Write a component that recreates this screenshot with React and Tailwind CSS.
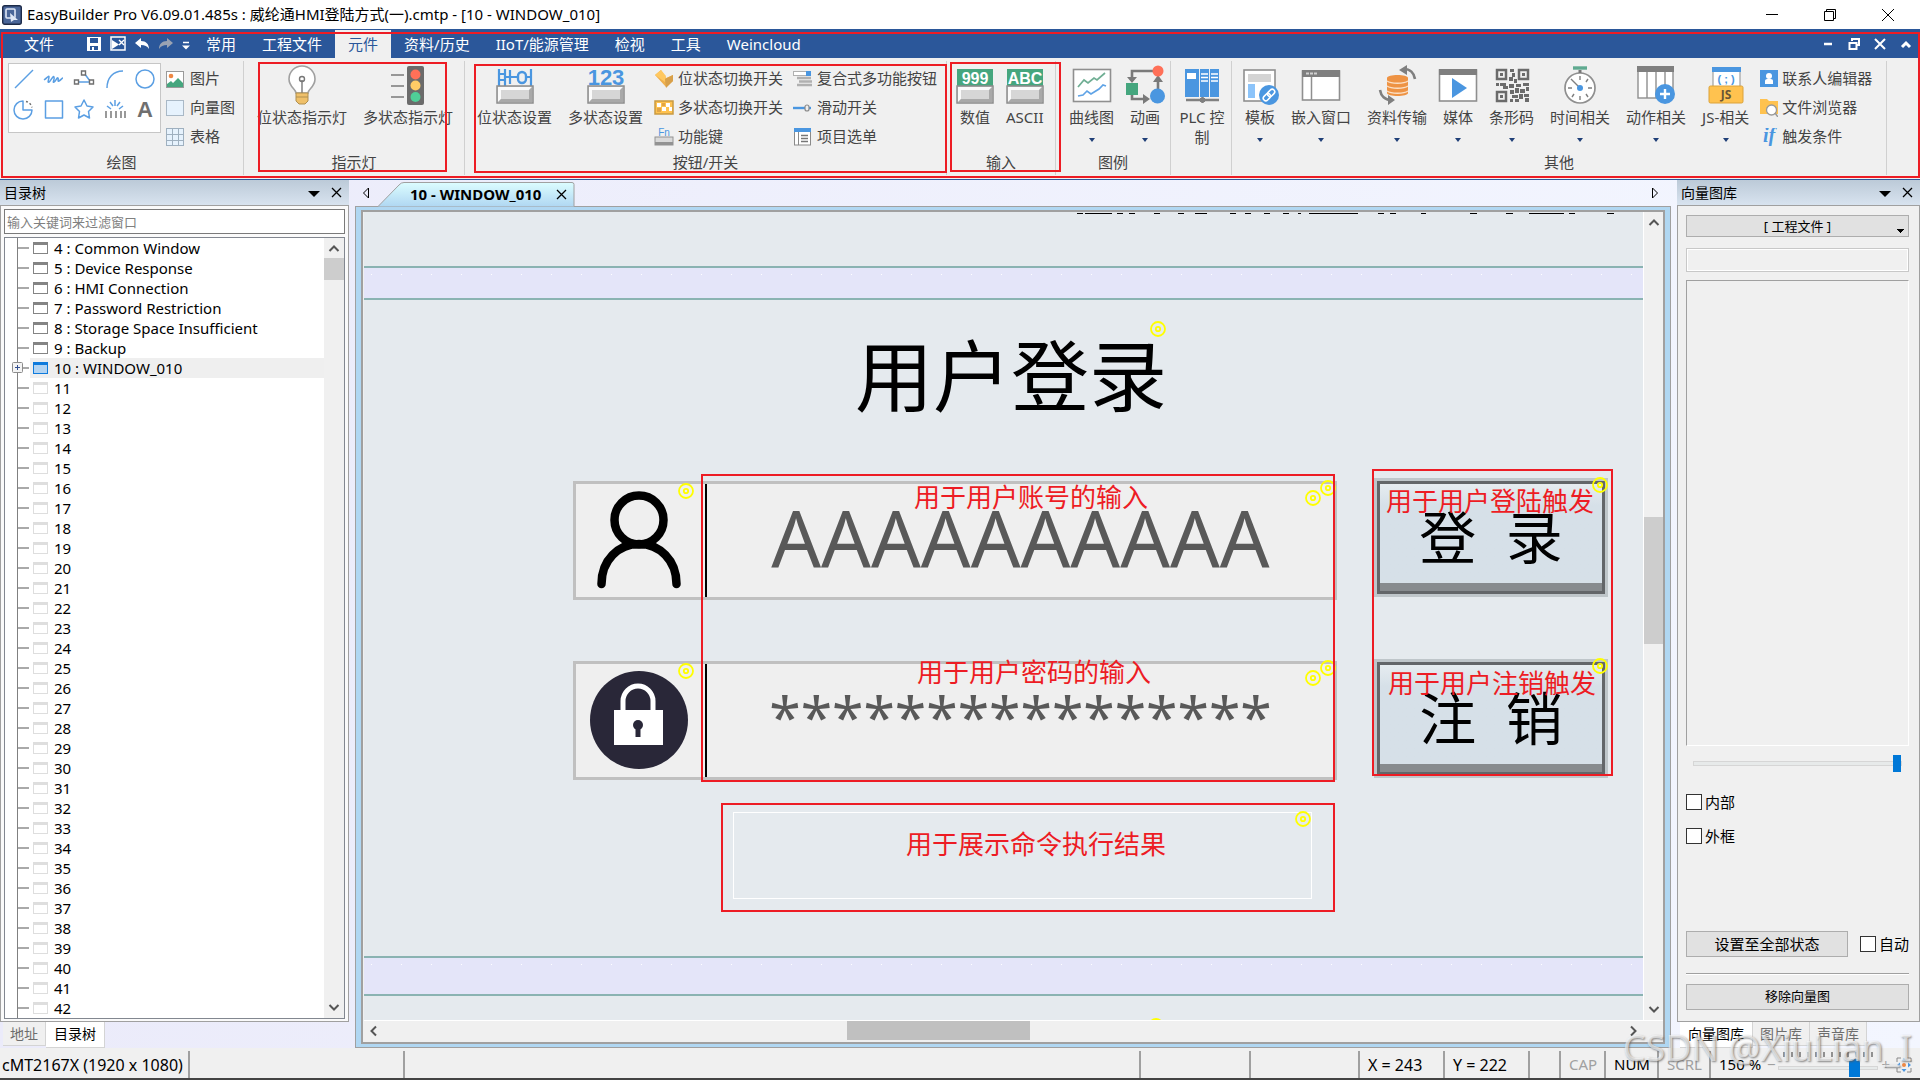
import { useState } from "react";
import clsx from "clsx";

const BLUE = "#4a96e0";
const GRAY = "#6f6f6f";

function Icon({ w = 40, h = 40, box, className, children }) {
  return (
    <svg width={w} height={h} viewBox={box || `0 0 ${w} ${h}`} fill="none" className={clsx("shrink-0", className)} aria-hidden="true">
      {children}
    </svg>
  );
}

/* ---------- ribbon icons ---------- */

function Keycap() {
  return (
    <>
      <rect x="2" y="21" width="36" height="17" fill="#d6d6d6" stroke="#8c8c8c" strokeWidth="1.5" />
      <path d="M3 22h34l-3 3H6v9l-3 3z" fill="#fafafa" />
      <path d="M37 22v15H3l3-3h28v-9z" fill="#a9a9a9" />
    </>
  );
}

const bulbIcon = (
  <Icon>
    <path d="M14 28c0-4-7-6-7-14a13 13 0 0 1 26 0c0 8-7 10-7 14z" fill="#fff" stroke="#a0a0a0" strokeWidth="1.6" />
    <circle cx="20" cy="14" r="2.5" stroke="#777" strokeWidth="1.4" />
    <path d="M20 15v13" stroke="#777" strokeWidth="1.4" />
    <path d="M14 28h12v8l-3 3h-6l-3-3z" fill="#efc06a" stroke="#b09050" strokeWidth="1" />
    <path d="M14 32h12" stroke="#b09050" />
  </Icon>
);

const trafficIcon = (
  <Icon>
    <path d="M3 10h13M3 21h13M3 32h13" stroke="#7a7a7a" strokeWidth="1.6" />
    <rect x="19" y="1" width="17" height="39" rx="2" fill="#6b6b6b" />
    <circle cx="27.500" cy="9.500" r="5" fill="#ff7058" />
    <circle cx="27.500" cy="20.500" r="5" fill="#ffcc66" />
    <circle cx="27.500" cy="32" r="5" fill="#4fce97" />
  </Icon>
);

const bitSetIcon = (
  <Icon>
    <path d="M4 4v17M10 4v17M4 9h6M4 15h6M10 12h4M15 5v14M15 12h8M36 4v17M31 12h5" stroke={BLUE} strokeWidth="2.2" />
    <rect x="23" y="7" width="8" height="11" rx="4" stroke={BLUE} strokeWidth="2.4" />
    <Keycap />
  </Icon>
);

const wordSetIcon = (
  <Icon>
    <text x="20" y="20" textAnchor="middle" fontSize="22" fontWeight="700" fill={BLUE} fontFamily="Liberation Sans">
      123
    </text>
    <Keycap />
  </Icon>
);

function CapLabelIcon({ label }) {
  return (
    <Icon>
      <rect x="2" y="4" width="36" height="18" fill="#45a67e" />
      <text x="20" y="19" textAnchor="middle" fontSize="16" fontWeight="700" fill="#fff" fontFamily="Liberation Sans">
        {label}
      </text>
      <Keycap />
    </Icon>
  );
}

const trendIcon = (
  <Icon>
    <rect x="1.500" y="4.500" width="37" height="32" fill="#fff" stroke="#8f8f8f" strokeWidth="1.600" />
    <path d="m6 22 6-7 4 3 6-5 3 2 8-7" stroke="#6fae93" strokeWidth="1.700" />
    <path d="m6 31 5-1 4-4 4 3 8-5 4-4 3 1" stroke="#5fa3e6" strokeWidth="1.700" />
  </Icon>
);

const animIcon = (
  <Icon>
    <path d="M32 6H7v9M7 30v4h13M33 24V14" stroke="#7a7a7a" strokeWidth="2.600" />
    <path d="M2 12h10l-5 6zM18 29v10l7-5zM28 17h10l-5-7z" fill="#7a7a7a" />
    <rect x="1" y="18" width="12" height="12" fill="#45a67e" />
    <circle cx="33" cy="6" r="5.500" fill="#ff7058" />
    <circle cx="32.500" cy="31" r="7.500" fill={BLUE} />
  </Icon>
);

const plcIcon = (
  <Icon>
    <rect x="3" y="4" width="14" height="28" fill={BLUE} />
    <rect x="18" y="4" width="9" height="28" fill={BLUE} />
    <rect x="28" y="4" width="9" height="28" fill={BLUE} />
    <rect x="5" y="8" width="9" height="6" fill="#fff" />
    <path d="M19 9h7M19 12.500h7M19 16h7M29 9h7M29 12.500h7M29 16h7" stroke="#fff" strokeWidth="1.500" />
    <path d="M4 35h33M20.500 32v6" stroke="#808080" strokeWidth="2.500" />
    <rect x="18" y="33" width="5" height="4" fill="#808080" />
  </Icon>
);

const templateIcon = (
  <Icon>
    <rect x="4" y="5" width="31" height="31" fill="#fff" stroke="#8f8f8f" strokeWidth="1.600" />
    <rect x="8" y="9" width="23" height="8" fill="#d4d4d4" />
    <rect x="8" y="19" width="7" height="14" fill="#8cc4fa" />
    <circle cx="29" cy="30" r="10" fill={BLUE} />
    <g transform="rotate(-45 29 30)" stroke="#fff" strokeWidth="1.600">
      <rect x="22" y="27.500" width="8" height="5" rx="2.500" />
      <rect x="28" y="27.500" width="8" height="5" rx="2.500" />
    </g>
  </Icon>
);

const embedIcon = (
  <Icon>
    <rect x="1.500" y="6" width="37" height="29" fill="#fff" stroke="#8f8f8f" strokeWidth="1.600" />
    <rect x="1" y="5" width="38" height="7" fill="#7f7f7f" />
    <path d="M5 8.500h3M9 8.500h3M13 8.500h3" stroke="#d0d0d0" strokeWidth="2" />
    <path d="M10.500 12v23" stroke="#8f8f8f" strokeWidth="1.500" />
  </Icon>
);

const transferIcon = (
  <Icon>
    <path d="M10 13c0-4 21-4 21 0v15c0 4-21 4-21 0z" fill="#ee9344" />
    <path d="M10 16c4 3 17 3 21 0M10 21c4 3 17 3 21 0M10 26c4 3 17 3 21 0" stroke="#fbe0c6" strokeWidth="1.300" />
    <path d="M27 4c6 0 10 4 11 10M14 35C8 35 4 31 3 25" stroke="#7f7f7f" strokeWidth="2.600" />
    <path d="m22 5 8-5v10zM18 35l-7-5v10z" fill="#7f7f7f" />
  </Icon>
);

const mediaIcon = (
  <Icon>
    <rect x="1.500" y="5" width="37" height="31" fill="#fff" stroke="#8f8f8f" strokeWidth="1.600" />
    <rect x="1" y="4" width="38" height="6" fill="#7f7f7f" />
    <path d="m14 13 15 10-15 10z" fill={BLUE} />
  </Icon>
);

const qrIcon = (
  <Icon>
    <g stroke="#6b6b6b" strokeWidth="2.500">
      <rect x="5" y="5" width="9" height="9" />
      <rect x="27" y="5" width="9" height="9" />
      <rect x="5" y="27" width="9" height="9" />
    </g>
    <path
      fill="#6b6b6b"
      d="M8 8h3v3H8zM30 8h3v3h-3zM8 30h3v3H8zM18 4h4v3h-4zM20 8h3v4h-3zM17 12h4v4h-4zM22 14h3v4h-3zM4 18h3v3H4zM8 18h6v3H8zM11 21h5v3h-5zM17 19h5v4h-5zM24 19h5v3h-5zM31 18h6v3h-6zM34 22h3v4h-3zM18 25h4v4h-4zM23 23h4v5h-4zM28 24h5v4h-5zM20 30h6v3h-6zM27 29h4v5h-4zM32 29h5v3h-5zM18 34h3v3h-3zM23 34h4v3h-4zM33 33h4v4h-4z"
    />
  </Icon>
);

const timerIcon = (
  <Icon>
    <circle cx="20" cy="23" r="15" fill="#fff" stroke="#8f8f8f" strokeWidth="1.700" />
    <path d="M13 3h14" stroke="#5faa90" strokeWidth="3.400" />
    <path d="M20 5v3" stroke="#777" strokeWidth="3" />
    <path d="M20 11v4M20 31v4M8 23h4M28 23h4M28 14l-2 3M12 32l2-3M28 32l-2-3M11 14l8 8" stroke="#7f7f7f" strokeWidth="1.400" />
    <circle cx="20" cy="23" r="3" fill={BLUE} />
  </Icon>
);

const actionIcon = (
  <Icon>
    <rect x="2" y="3" width="35" height="30" fill="#fff" stroke="#8f8f8f" strokeWidth="1.400" />
    <rect x="1" y="1" width="37" height="6" fill="#7f7f7f" />
    <path d="M11 7v26M20 7v26M29 7v26" stroke="#8f8f8f" strokeWidth="1.400" />
    <circle cx="29" cy="29" r="10" fill={BLUE} />
    <path d="M24 29h10M29 24v10" stroke="#fff" strokeWidth="2.400" />
  </Icon>
);

const jsIcon = (
  <Icon>
    <rect x="7" y="3" width="27" height="20" fill="#fff" stroke="#a0a0a0" strokeWidth="1.200" />
    <rect x="6" y="2" width="29" height="5" fill={BLUE} />
    <text x="20" y="18" textAnchor="middle" fontSize="11" fontWeight="700" fill={BLUE} fontFamily="Liberation Sans">
      {"( ; )"}
    </text>
    <rect x="3" y="21" width="34" height="17" rx="1.500" fill="#ffc24f" stroke="#dba23a" />
    <text x="20" y="34" textAnchor="middle" fontSize="12" fontWeight="700" fill="#6a5636" fontFamily="Noto Sans">
      JS
    </text>
  </Icon>
);

const smallIcons = {
  picture: (
    <Icon w={18} h={18}>
      <rect x=".5" y="1.500" width="17" height="16" fill="#fff" stroke="#9a9a9a" />
      <circle cx="5" cy="6" r="2.300" fill="#ee8844" />
      <path d="m1 14 4-3 2 2 5-5 5 5v4H1z" fill="#45a67e" />
    </Icon>
  ),
  vector: (
    <Icon w={18} h={18}>
      <rect x=".5" y="1.500" width="17" height="15" fill="#e6f2fd" stroke="#a9b8c6" />
    </Icon>
  ),
  table: (
    <Icon w={18} h={18}>
      <rect x=".5" y=".5" width="17" height="17" fill="#e6f2fd" stroke="#9fb0bf" />
      <path d="M6.500 0v18M12.500 0v18M0 6.500h18M0 12.500h18" stroke="#9fb0bf" />
    </Icon>
  ),
  toggle: (
    <Icon w={20} h={18}>
      <path d="m1 5 6-5 5 8 7-3v6l-7 6z" fill="#efb04e" />
      <path d="m1 5 6-5 5 6-1 6z" fill="#ffc860" />
      <path d="m11 9 8-4v6l-7 7z" fill="#d8a04a" />
    </Icon>
  ),
  multiToggle: (
    <Icon w={20} h={18}>
      <rect x="1" y="2" width="18" height="13" fill="#ffc24f" stroke="#c99a42" strokeWidth="1.500" />
      <path d="M3 4h4v4H3zM12 4h4v4h-4zM8 8h4v4H8zM15 8h3v4h-3z" fill="#fff" />
      <path d="M3 9h4v4H3zM8 4h3v3H8z" fill="#e0a548" />
    </Icon>
  ),
  fnKey: (
    <Icon w={20} h={18}>
      <text x="10" y="8" textAnchor="middle" fontSize="10" fill={BLUE} fontFamily="Liberation Sans">
        Fn
      </text>
      <rect x="1" y="9" width="18" height="8" fill="#d9d9d9" stroke="#929292" />
      <path d="M1 14h18v3H1z" fill="#929292" />
    </Icon>
  ),
  combo: (
    <Icon w={20} h={18}>
      <rect x=".5" y="1.500" width="17" height="4" fill="#fff" stroke="#b0b0b0" />
      <rect x="13" y="1" width="5" height="5" fill={BLUE} />
      <path d="M4 8h14M6 11.500h13M4 15h15" stroke="#b0b0b0" strokeWidth="2.400" />
    </Icon>
  ),
  slide: (
    <Icon w={20} h={18}>
      <path d="M0 9h18" stroke={BLUE} strokeWidth="2.400" />
      <rect x="12" y="6" width="4" height="6" rx="2" fill="#eee" stroke="#8a8a8a" strokeWidth="1.200" />
    </Icon>
  ),
  list: (
    <Icon w={20} h={18}>
      <rect x="1.500" y="1" width="16" height="16" fill="#fff" stroke="#8a8a8a" />
      <rect x="1" y="0" width="17" height="4" fill={BLUE} />
      <path d="M5.500 4v13" stroke="#8a8a8a" />
      <path d="M8 7.500h7M8 10.500h7M8 13.500h7" stroke="#777" strokeWidth="1.300" />
    </Icon>
  ),
  contact: (
    <Icon w={18} h={18}>
      <rect width="18" height="17" fill={BLUE} />
      <circle cx="9" cy="6" r="3" fill="#fff" />
      <path d="M5 14v-3c0-2 2-2 4-2s4 0 4 2v3z" fill="#fff" />
    </Icon>
  ),
  files: (
    <Icon w={18} h={18}>
      <path d="M0 0h7l2 2h9v13H0z" fill="#ffc24f" />
      <circle cx="11.500" cy="11" r="5" fill="#fff" stroke="#999" strokeWidth="1.300" />
      <path d="m15 14 3 4" stroke="#999" strokeWidth="1.600" />
    </Icon>
  ),
  cond: (
    <Icon w={18} h={18}>
      <text x="9" y="14" textAnchor="middle" fontSize="20" fontStyle="italic" fontWeight="700" fill={BLUE} fontFamily="Liberation Serif">
        if
      </text>
    </Icon>
  ),
};

const shapes = [
  ["直线", <path key="s" d="M2 19 20 1" />],
  ["手绘线", <path key="s" d="M1 11c3-2 5-5 5-3s-2 6 0 5 4-7 5-5-2 6 0 5 3-5 4-4-1 4 1 3 3-3 4-3" />],
  ["折线", <path key="s" d="M4 13h14M11 4l6 8" />],
  ["弧线", <path key="s" d="M3 19C3 9 9 2 19 2" />],
  ["圆形", <circle key="s" cx="11" cy="10" r="9" />],
  ["扇形", <path key="s" d="M10 2a9 9 0 1 0 9 9h-9z" />],
  ["矩形", <rect key="s" x="2.500" y="2" width="17" height="17" />],
  ["多边形", <path key="s" d="m11 1 3 6 6 1-4.500 4.500 1 6.500L11 16l-5.500 3 1-6.500L2 8l6-1z" />],
  ["刻度", <path key="s" d="M3 7l4 3M11 1v6M19 7l-4 3M6 3l3 4M16 3l-3 4" />],
];

const shapeDetails = {
  折线: <path d="M1.500 11h4v4h-4zM8.500 2h4v4h-4zM16.500 11h4v4h-4z" fill="#fff" stroke={GRAY} strokeWidth="1.400" />,
  扇形: <path d="M13 2.500a8 8 0 0 1 6 6" stroke={GRAY} strokeWidth="1.400" strokeDasharray="2 2" />,
  刻度: <path d="M2 12v7M7 12v7M12 12v7M17 12v7M21 12v7" stroke={GRAY} strokeWidth="1.400" />,
};

/* ---------- ribbon ---------- */

function BigButton({ icon, label, caret, narrow }) {
  return (
    <button type="button" className="flex shrink-0 flex-col items-center px-2">
      <span className="-mx-2">{icon}</span>
      <span className={clsx("mt-[2px] leading-5", narrow ? "w-[46px]" : "whitespace-nowrap")}>{label}</span>
      {caret && <span className="mt-[11px] border-x-[3px] border-t-4 border-x-transparent border-t-[#1f3f77]" />}
    </button>
  );
}

function SmallColumn({ items, className }) {
  return (
    <div className={clsx("-mt-px flex shrink-0 flex-col", className)}>
      {items.map(([icon, label]) => (
        <button key={label} type="button" className="flex h-[29px] items-center gap-1 whitespace-nowrap text-left">
          {smallIcons[icon]}
          {label}
        </button>
      ))}
    </div>
  );
}

function Group({ label, className, inner = "pl-[5px]", mark, children }) {
  return (
    <section className={clsx("relative flex shrink-0 flex-col border-r border-[#d0d0d0] pt-1 pb-[3px]", className)}>
      <div className={clsx("flex items-start", inner)}>{children}</div>
      <h3 className="mt-auto text-center leading-5">{label}</h3>
      {mark && <div className={clsx("pointer-events-none absolute border-2 border-[#ed1c24]", mark)} />}
    </section>
  );
}

function Ribbon() {
  return (
    <div className="flex h-[121px] bg-[#f0f0f0] pt-[3px] pb-1 text-[15px] text-[#444]">
      <Group label="绘图" className="w-[244px]" inner="pl-2">
        <div className="-mt-0.5 grid w-[153px] shrink-0 grid-cols-5 border border-[#c6c6c6] bg-white pb-2">
          {shapes.map(([name, shape]) => (
            <button key={name} type="button" aria-label={name} className="flex h-[30px] items-center justify-center">
              <Icon w={22} h={20} className="overflow-visible">
                <g stroke="#5b9fe3" strokeWidth="1.500" strokeLinejoin="round">
                  {shape}
                </g>
                {shapeDetails[name]}
              </Icon>
            </button>
          ))}
          <button type="button" className="flex h-[30px] items-center justify-center font-['Liberation_Sans'] text-[22px] font-bold text-[#6f6f6f]">
            A
          </button>
        </div>
        <SmallColumn className="ml-[5px] [&>button]:gap-[6px]" items={[["picture", "图片"], ["vector", "向量图"], ["table", "表格"]]} />
      </Group>
      <Group label="指示灯" className="w-[221px]" mark="top-[1px] left-[14px] h-[110px] w-[189px]">
        <BigButton icon={bulbIcon} label="位状态指示灯" />
        <BigButton icon={trafficIcon} label="多状态指示灯" />
      </Group>
      <Group label="按钮/开关" className="w-[482px]" inner="pl-1" mark="top-[3px] left-[9px] h-[109px] w-[473px]">
        <BigButton icon={bitSetIcon} label="位状态设置" />
        <BigButton icon={wordSetIcon} label="多状态设置" />
        <SmallColumn className="ml-[3px]" items={[["toggle", "位状态切换开关"], ["multiToggle", "多状态切换开关"], ["fnKey", "功能键"]]} />
        <SmallColumn className="ml-[10px]" items={[["combo", "复合式多功能按钮"], ["slide", "滑动开关"], ["list", "项目选单"]]} />
      </Group>
      <Group label="输入" className="w-[109px]" mark="top-[1px] left-[3px] h-[110px] w-[111px]">
        <BigButton icon={<CapLabelIcon label="999" />} label="数值" />
        <BigButton icon={<CapLabelIcon label="ABC" />} label="ASCII" />
      </Group>
      <Group label="图例" className="w-[115px]">
        <BigButton icon={trendIcon} label="曲线图" caret />
        <BigButton icon={animIcon} label="动画" caret />
      </Group>
      <Group className="w-[61px]" inner="pl-0">
        <BigButton icon={plcIcon} label="PLC 控制" narrow />
      </Group>
      <Group label="其他" className="w-[655px]">
        <BigButton icon={templateIcon} label="模板" caret />
        <BigButton icon={embedIcon} label="嵌入窗口" caret />
        <BigButton icon={transferIcon} label="资料传输" caret />
        <BigButton icon={mediaIcon} label="媒体" caret />
        <BigButton icon={qrIcon} label="条形码" caret />
        <BigButton icon={timerIcon} label="时间相关" caret />
        <BigButton icon={actionIcon} label="动作相关" caret />
        <BigButton icon={jsIcon} label="JS-相关" caret />
        <SmallColumn className="ml-[3px]" items={[["contact", "联系人编辑器"], ["files", "文件浏览器"], ["cond", "触发条件"]]} />
      </Group>
    </div>
  );
}

const menuTabs = ["常用", "工程文件", "元件", "资料/历史", "IIoT/能源管理", "检视", "工具", "Weincloud"];

function MenuBar() {
  const [active, setActive] = useState("元件");
  return (
    <nav className="flex h-[29px] items-stretch bg-[#2b579a] pt-px text-[15px] leading-7 text-white">
      <button type="button" className="pl-6">
        文件
      </button>
      <div className="ml-8 flex items-center gap-2">
        <button type="button" aria-label="保存">
          <Icon w={16} h={16}>
            <path d="M1 1h14v14H1z" fill="#fff" />
            <path d="M4 2h8v5H4zM4 10h8v4H4z" fill="#2b579a" />
            <path d="M6 11h2v3H6z" fill="#fff" />
          </Icon>
        </button>
        <button type="button" aria-label="编译">
          <Icon w={16} h={16}>
            <path d="M1 1h14v13H1z" stroke="#fff" strokeWidth="1.500" />
            <path d="M2 4v9l7-4.500z" fill="#fff" />
            <path d="m9 4 5 5M14 4 9 9" stroke="#fff" strokeWidth="1.400" />
          </Icon>
        </button>
        <button type="button" aria-label="撤销">
          <Icon w={16} h={16}>
            <path d="M1 7 7 2v3c5 0 8 3 8 8-2-3-4-4-8-4v3z" fill="#fff" />
          </Icon>
        </button>
        <button type="button" aria-label="重做">
          <Icon w={16} h={16}>
            <path d="M15 7 9 2v3c-5 0-8 3-8 8 2-3 4-4 8-4v3z" fill="#9aa3b3" />
          </Icon>
        </button>
        <button type="button" aria-label="更多">
          <Icon w={8} h={16}>
            <path d="M1 6.500h6" stroke="#fff" strokeWidth="1.500" />
            <path d="M0 9.500h8l-4 4z" fill="#fff" />
          </Icon>
        </button>
      </div>
      <div className="ml-[3px] flex">
        {menuTabs.map((tab) => (
          <button
            key={tab}
            type="button"
            onClick={() => setActive(tab)}
            className={clsx("px-[13px] whitespace-nowrap", tab === active && "bg-[#f0f0f0] text-[#2b579a]")}
          >
            {tab}
          </button>
        ))}
      </div>
      <div className="ml-auto flex items-center gap-[10px] pr-[6px]">
        <button type="button" aria-label="最小化文档">
          <Icon w={16} h={16}>
            <path d="M4 8h8" stroke="#fff" strokeWidth="2.500" />
          </Icon>
        </button>
        <button type="button" aria-label="还原文档">
          <Icon w={16} h={16}>
            <path d="M6 5V3h7v6h-2M3.500 7h7v6h-7z" stroke="#fff" strokeWidth="2" />
          </Icon>
        </button>
        <button type="button" aria-label="关闭文档">
          <Icon w={16} h={16}>
            <path d="m3 3 10 10M13 3 3 13" stroke="#fff" strokeWidth="2" />
          </Icon>
        </button>
        <button type="button" aria-label="折叠功能区">
          <Icon w={16} h={16}>
            <path d="m4 11 4-4 4 4" stroke="#fff" strokeWidth="3" />
          </Icon>
        </button>
      </div>
    </nav>
  );
}

function TitleBar() {
  return (
    <header className="flex h-[29px] items-center bg-white pl-[2px] text-[15px] text-black">
      <Icon w={20} h={20}>
        <rect x=".7" y=".7" width="18.600" height="18.600" rx="2" fill="#4a6699" stroke="#1d2b49" strokeWidth="1.400" />
        <rect x="4" y="4" width="9" height="9" rx="1" stroke="#dfe7f5" strokeWidth="1.600" />
        <path d="m8 8 8 7-4 0-3 2z" fill="#dfe7f5" />
      </Icon>
      <h1 className="ml-[5px] whitespace-nowrap">EasyBuilder Pro V6.09.01.485s : 威纶通HMI登陆方式(一).cmtp - [10 - WINDOW_010]</h1>
      <div className="ml-auto flex gap-[46px] pr-[26px]">
        <button type="button" aria-label="最小化">
          <Icon w={12} h={12}>
            <path d="M0 5.500h12" stroke="#000" />
          </Icon>
        </button>
        <button type="button" aria-label="还原">
          <Icon w={12} h={12}>
            <path d="M.5 2.500h9v9h-9zM2.500 2V.5h9v9H10" stroke="#000" />
          </Icon>
        </button>
        <button type="button" aria-label="关闭">
          <Icon w={12} h={12}>
            <path d="m0 0 12 12M12 0 0 12" stroke="#000" />
          </Icon>
        </button>
      </div>
    </header>
  );
}

/* ---------- docked panels ---------- */

function PanelHeader({ title }) {
  return (
    <div className="flex h-[25px] shrink-0 items-center bg-linear-to-b from-[#bccad8] to-[#d8e3ef] pr-[7px] pl-1 text-sm text-black">
      <h2>{title}</h2>
      <button type="button" aria-label="面板选项" className="ml-auto">
        <Icon w={12} h={12}>
          <path d="M0 4h12l-6 6z" fill="#000" />
        </Icon>
      </button>
      <button type="button" aria-label="关闭面板" className="ml-[11px]">
        <Icon w={11} h={11}>
          <path d="m1 1 9 9M10 1l-9 9" stroke="#000" strokeWidth="1.300" />
        </Icon>
      </button>
    </div>
  );
}

function Chevron({ d }) {
  return (
    <Icon w={20} h={20}>
      <path d={d} stroke="#555" strokeWidth="2" />
    </Icon>
  );
}

const UP = "m5.500 13 4.500-4.500 4.500 4.500";
const DOWN = "m5.500 7 4.500 4.500 4.500-4.500";
const LEFT = "M12 5.500 7.500 10l4.500 4.500";
const RIGHT = "m8 5.500 4.500 4.500L8 14.500";

const windowNames = {
  4: "Common Window",
  5: "Device Response",
  6: "HMI Connection",
  7: "Password Restriction",
  8: "Storage Space Insufficient",
  9: "Backup",
  10: "WINDOW_010",
};
const windows = Array.from({ length: 39 }, (_, i) => i + 4);

function WindowRow({ id }) {
  const name = windowNames[id];
  const selected = id === 10;
  return (
    <li className="flex h-5 items-center pl-3">
      <span className="relative h-5 w-[13px] shrink-0">
        <span className="absolute left-0 h-full w-px bg-[#808080]" />
        <span className="absolute top-[9px] left-px h-[2px] w-[11px] bg-[#a9a9a9]" />
        {selected && (
          <span className="absolute top-1 -left-[5px]">
            <Icon w={11} h={11}>
              <rect x=".5" y=".5" width="10" height="10" rx="1" fill="#f4f4f4" stroke="#8c8c8c" />
              <path d="M3 5.500h5M5.500 3v5" stroke="#33508f" />
            </Icon>
          </span>
        )}
      </span>
      <span className={clsx("flex h-5 flex-1 items-center gap-[6px] pl-[3px] whitespace-nowrap", selected && "bg-[#efefef]")}>
        <span
          className={clsx(
            "h-3 w-[15px] shrink-0 border border-t-[3px]",
            selected ? "border-[#0f7bdc] bg-[#b3d4f2]" : name ? "border-[#848484] bg-white" : "border-[#dedede] bg-white"
          )}
        />
        {name ? `${id} : ${name}` : id}
      </span>
    </li>
  );
}

function WindowTree() {
  return (
    <aside className="flex w-[349px] shrink-0 flex-col">
      <PanelHeader title="目录树" />
      <div className="flex min-h-0 flex-1 flex-col gap-[3px] border border-[#a0a0a0] bg-[#fafafa] p-[3px] pb-[2px]">
        <input
          type="text"
          aria-label="过滤窗口"
          placeholder="输入关键词来过滤窗口"
          className="h-[25px] shrink-0 border border-[#7a7a7a] bg-white px-[2px] text-[13px] text-black placeholder:text-[#808080]"
        />
        <div className="flex min-h-0 flex-1 border border-[#828790] bg-white">
          <ul className="flex-1 overflow-hidden text-[15px] text-black">
            {windows.map((id) => (
              <WindowRow key={id} id={id} />
            ))}
          </ul>
          <div className="flex w-5 flex-col items-center bg-[#f0f0f0]">
            <Chevron d={UP} />
            <div className="h-[22px] w-full bg-[#cdcdcd]" />
            <div className="mt-auto">
              <Chevron d={DOWN} />
            </div>
          </div>
        </div>
      </div>
      <div className="flex h-[26px] shrink-0 items-start pl-[3px] text-sm">
        <button type="button" className="h-6 border-r border-b border-[#d4d4d4] bg-[#f0f0f0] px-[7px] text-[#6d6d6d]">
          地址
        </button>
        <button type="button" className="h-[26px] border-r border-b border-[#d4d4d4] bg-white px-2 pb-[2px] text-black">
          目录树
        </button>
      </div>
    </aside>
  );
}

function Check({ id, label }) {
  return (
    <label htmlFor={id} className="flex items-center gap-[3px] text-[15px] leading-4 text-black">
      <input id={id} type="checkbox" className="size-4 shrink-0 appearance-none border border-[#333] bg-white checked:bg-[#0078d7]" />
      {label}
    </label>
  );
}

function VectorLibrary() {
  return (
    <aside className="flex w-[243px] shrink-0 flex-col">
      <PanelHeader title="向量图库" />
      <div className="flex min-h-0 flex-1 flex-col border border-[#a0a0a0] bg-[#f0f0f0] pt-[9px] pr-[10px] pl-2">
        <select
          aria-label="图库来源"
          className="h-[22px] w-full shrink-0 appearance-none border border-[#adadad] bg-[#e1e1e1] bg-[linear-gradient(45deg,transparent_50%,#000_50%),linear-gradient(-45deg,transparent_50%,#000_50%)] bg-[length:4px_4px] bg-[position:right_7px_bottom_3px,right_3px_bottom_3px] bg-no-repeat text-center text-[13px] leading-[18px] text-black"
        >
          <option>[ 工程文件 ]</option>
        </select>
        <input type="text" aria-label="图库名称" className="mt-[11px] h-6 shrink-0 border border-[#c8c8c8] bg-[#f0f0f0] shadow-[inset_0_0_0_1px_#fff]" />
        <div className="mt-2 min-h-0 flex-1 border-t border-r border-b border-l border-t-[#a0a0a0] border-r-white border-b-white border-l-[#a0a0a0]" />
        <input
          type="range"
          aria-label="缩放"
          defaultValue={100}
          className="mx-[7px] mt-2 h-[18px] shrink-0 appearance-none bg-transparent [&::-webkit-slider-runnable-track]:h-[5px] [&::-webkit-slider-runnable-track]:border [&::-webkit-slider-runnable-track]:border-[#d6d6d6] [&::-webkit-slider-runnable-track]:bg-[#e7eaea] [&::-webkit-slider-thumb]:-mt-[7px] [&::-webkit-slider-thumb]:h-[17px] [&::-webkit-slider-thumb]:w-2 [&::-webkit-slider-thumb]:appearance-none [&::-webkit-slider-thumb]:bg-[#0078d7]"
        />
        <div className="mt-[22px] flex h-[137px] shrink-0 flex-col gap-[18px]">
          <Check id="inner" label="内部" />
          <Check id="frame" label="外框" />
        </div>
        <div className="flex shrink-0 items-center gap-3">
          <button type="button" className="h-[26px] flex-1 border border-[#adadad] bg-[#e1e1e1] text-[15px] text-black">
            设置至全部状态
          </button>
          <Check id="auto" label="自动" />
        </div>
        <hr className="mt-4 border-t border-b border-t-[#a0a0a0] border-b-white" />
        <button type="button" className="mt-[9px] mb-[11px] h-[26px] shrink-0 border border-[#adadad] bg-[#e1e1e1] text-[13px] text-black">
          移除向量图
        </button>
      </div>
      <div className="flex h-[26px] shrink-0 items-start pl-[3px] text-sm text-[#6d6d6d]">
        <button type="button" className="h-[26px] border-r border-b border-[#d4d4d4] bg-white px-2 pb-[2px] text-black">
          向量图库
        </button>
        <button type="button" className="h-6 border-r border-b border-[#d4d4d4] bg-[#f0f0f0] px-[7px]">
          图片库
        </button>
        <button type="button" className="h-6 border-r border-b border-[#d4d4d4] bg-[#f0f0f0] px-[7px]">
          声音库
        </button>
      </div>
    </aside>
  );
}

/* ---------- design canvas ---------- */

function Marker({ at }) {
  return (
    <div className={clsx("absolute", at)}>
      <Icon w={16} h={16}>
        <circle cx="8" cy="8" r="7" stroke="#ff0" strokeWidth="1.800" />
        <circle cx="8" cy="8" r="2.200" stroke="#ff0" strokeWidth="1.800" />
      </Icon>
    </div>
  );
}

function Note({ at, children }) {
  return <p className={clsx("absolute text-[26px] leading-8 whitespace-nowrap text-[#ed1c24]", at)}>{children}</p>;
}

function Frame({ at }) {
  return <div className={clsx("pointer-events-none absolute border-2 border-[#ed1c24]", at)} />;
}

function FieldBox({ at, icon, label, value, inputClass }) {
  return (
    <div className={clsx("absolute flex h-[119px] w-[764px] border-[3px] border-[#c0c0c0] bg-[#efefef]", at)}>
      <div className="flex w-[131px] shrink-0 justify-center border-r-2 border-r-black pr-1">{icon}</div>
      <input
        readOnly
        type="text"
        aria-label={label}
        value={value}
        className={clsx("min-w-0 flex-1 bg-transparent text-center text-[#595959] outline-none", inputClass)}
      />
    </div>
  );
}

function HmiButton({ at, children }) {
  return (
    <button type="button" className={clsx("absolute h-[119px] w-[234px] border-[3px] border-[#bfc6ca] bg-[#d7e1e8] text-black", at)}>
      <span className="flex h-full flex-col border-[3px] border-[#636669] bg-linear-to-b from-[#e6ecf0] to-[#d6e0e8] to-20%">
        <span className="flex-1 pt-[18px] text-[57px] leading-[70px] whitespace-pre">{children}</span>
        <span className="h-2 bg-[#878b8e]" />
      </span>
    </button>
  );
}

const userIcon = (
  <Icon w={84} h={113}>
    <g stroke="#000" strokeWidth="8.500" strokeLinecap="round">
      <circle cx="42" cy="36" r="24.500" />
      <path d="M4.500 100c0-24 17-40 37.500-40s37.500 16 37.500 40" />
    </g>
  </Icon>
);

const lockIcon = (
  <Icon w={98} h={113}>
    <circle cx="49" cy="56" r="49" fill="#292738" />
    <path d="M33 50V37a15 15 0 0 1 30 0v13" stroke="#fff" strokeWidth="5" />
    <rect x="24" y="46" width="49" height="35" fill="#fff" />
    <circle cx="48" cy="61" r="5" fill="#292738" />
    <path d="M48 62v11" stroke="#292738" strokeWidth="5" />
  </Icon>
);

// bottom edges of the object scrolled out above the visible area: [x, width]
const clipped = [
  [713, 6], [721, 27], [753, 6], [765, 6], [790, 6], [814, 6], [831, 12], [866, 6], [881, 6], [900, 6], [919, 6], [934, 3],
  [945, 49], [1014, 6], [1026, 6], [1057, 5], [1106, 7], [1142, 7], [1165, 35], [1205, 6], [1243, 7],
];

function Band({ at }) {
  return (
    <div className={clsx("absolute inset-x-0 border-y-2 border-[#8ab3b2] bg-[#e4e5f9]", at)}>
      <div className="mt-[6px] ml-[7px] h-px bg-[repeating-linear-gradient(90deg,#fff_0_1px,transparent_1px_30px)]" />
    </div>
  );
}

function Canvas() {
  return (
    <div className="relative min-w-0 flex-1 overflow-hidden bg-[#e5eaee]">
      <Icon w={1280} h={2} className="absolute top-0 left-0">
        {clipped.map(([x, width]) => (
          <rect key={x} x={x} y="1" width={width} height="1" fill="#000" />
        ))}
      </Icon>
      <Band at="top-[54px] h-[34px]" />
      <Band at="top-[744px] h-[40px]" />
      <p className="absolute top-[116px] left-[491px] text-[78px] leading-[96px] whitespace-nowrap text-black">用户登录</p>

      <FieldBox at="top-[269px] left-[209px]" icon={userIcon} label="用户账号" value="AAAAAAAAAA" inputClass="pb-[6px] text-[78px]" />
      <FieldBox at="top-[449px] left-[209px]" icon={lockIcon} label="用户密码" value="****************" inputClass="pb-2 text-[57px]" />
      <HmiButton at="top-[266px] left-[1010px]">登  录</HmiButton>
      <HmiButton at="top-[447px] left-[1010px]">注  销</HmiButton>
      <div className="absolute top-[600px] left-[369px] h-[87px] w-[579px] border border-white" />

      <Marker at="top-[109px] left-[786px]" />
      <Marker at="top-[271px] left-[314px]" />
      <Marker at="top-[451px] left-[314px]" />
      <Marker at="top-[278px] left-[941px]" />
      <Marker at="top-[268px] left-[956px]" />
      <Marker at="top-[458px] left-[941px]" />
      <Marker at="top-[448px] left-[956px]" />
      <Marker at="top-[265px] left-[1228px]" />
      <Marker at="top-[446px] left-[1228px]" />
      <Marker at="top-[599px] left-[931px]" />
      <Marker at="top-[806px] left-[784px]" />

      <Note at="top-[269px] left-[550px]">用于用户账号的输入</Note>
      <Note at="top-[444px] left-[553px]">用于用户密码的输入</Note>
      <Note at="top-[273px] left-[1022px]">用于用户登陆触发</Note>
      <Note at="top-[455px] left-[1024px]">用于用户注销触发</Note>
      <Note at="top-[616px] left-[542px]">用于展示命令执行结果</Note>
      <Frame at="top-[262px] left-[337px] h-[308px] w-[634px]" />
      <Frame at="top-[257px] left-[1008px] h-[307px] w-[241px]" />
      <Frame at="top-[591px] left-[357px] h-[109px] w-[614px]" />
    </div>
  );
}

function Editor() {
  return (
    <main className="mx-[6px] flex min-w-0 flex-1 flex-col">
      <div className="flex h-[26px] shrink-0 items-center pr-3 pl-[7px]">
        <button type="button" aria-label="上一个标签">
          <Icon w={8} h={12}>
            <path d="M6.500 1v10l-5-5z" stroke="#000" />
          </Icon>
        </button>
        <div className="relative ml-2 flex h-full w-[197px] items-center pt-[2px]">
          <Icon w={197} h={25} className="absolute bottom-[-1px] left-0">
            <defs>
              <linearGradient id="tab" x1="0" y1="0" x2="0" y2="1">
                <stop offset="0" stopColor="#dcfdff" />
                <stop offset="1" stopColor="#b0d7f2" />
              </linearGradient>
            </defs>
            <path d="M0 24.500 21 3q2-2.500 5-2.500h168q2 0 2 2v22z" fill="url(#tab)" />
            <path d="M0 24.500 21 3q2-2.500 5-2.500h168q2 0 2 2v22" stroke="#a0a0a0" />
          </Icon>
          <span className="relative ml-8 text-[15px] font-bold whitespace-nowrap text-black">10 - WINDOW_010</span>
          <button type="button" aria-label="关闭标签" className="relative mr-2 ml-auto">
            <Icon w={11} h={11}>
              <path d="m1 1 9 9M10 1l-9 9" stroke="#000" strokeWidth="1.300" />
            </Icon>
          </button>
        </div>
        <button type="button" aria-label="下一个标签" className="ml-auto">
          <Icon w={8} h={12}>
            <path d="M1.500 1v10l5-5z" stroke="#000" />
          </Icon>
        </button>
      </div>
      <div className="flex min-h-0 flex-1 border border-[#a0a0a0] bg-[#b0d7f2] px-[5px] py-[3px]">
        <div className="flex min-h-0 min-w-0 flex-1 flex-col border-2 border-[#a0a0a0] bg-[#f0f0f0] pl-px">
          <div className="flex min-h-0 flex-1">
            <Canvas />
            <div className="flex w-5 flex-col border-l border-white">
              <Chevron d={UP} />
              <div className="mt-[285px] h-[127px] w-[19px] bg-[#cdcdcd]" />
              <div className="mt-auto">
                <Chevron d={DOWN} />
              </div>
            </div>
          </div>
          <div className="flex h-[22px] border-t border-white pr-5">
            <Chevron d={LEFT} />
            <div className="ml-[463px] h-[19px] w-[183px] bg-[#c0c0c0]" />
            <div className="ml-auto">
              <Chevron d={RIGHT} />
            </div>
          </div>
        </div>
      </div>
    </main>
  );
}

/* ---------- status bar ---------- */

function Cell({ className, children }) {
  return <div className={clsx("flex shrink-0 items-center border-r-2 border-[#a0a0a0] whitespace-nowrap", className)}>{children}</div>;
}

function StatusBar() {
  return (
    <footer className="relative flex h-8 shrink-0 border-b-2 border-[#444] bg-[#f0f0f0] pt-[3px] text-base text-black">
      <Cell className="w-[190px] pl-[2px]">cMT2167X (1920 x 1080)</Cell>
      <Cell className="w-[215px]" />
      <div className="flex-1 border-r-2 border-[#a0a0a0]" />
      <Cell className="w-[110px]" />
      <Cell className="w-[109px]" />
      <Cell className="w-[85px] pl-2">X = 243</Cell>
      <Cell className="w-[85px] pl-2">Y = 222</Cell>
      <Cell className="w-[31px]" />
      <Cell className="w-[45px] pl-2 text-[15px] text-[#a0a0a0]">CAP</Cell>
      <Cell className="w-[53px] pl-2 text-[15px]">NUM</Cell>
      <Cell className="w-[52px] pl-2 text-[15px] text-[#a0a0a0]">SCRL</Cell>
      <div className="flex w-[209px] shrink-0 items-center pl-2 text-[15px]">
        <span className="w-[48px] whitespace-nowrap">150 %</span>
        <span className="text-[#a0a0a0]">−</span>
        <div className="ml-[2px] flex w-[100px] flex-col">
          <Icon w={100} h={6} className="ml-1">
            <path d="M2 0v5M10 0v5M18 0v5M26 0v5M34 0v5M42 0v5M50 0v5M58 0v5M66 0v5M74 0v5M82 0v5M90 0v5" stroke="#333" />
          </Icon>
          <input
            type="range"
            aria-label="显示比例"
            defaultValue={81}
            className="h-5 w-full appearance-none bg-transparent [&::-webkit-slider-runnable-track]:h-1 [&::-webkit-slider-runnable-track]:border [&::-webkit-slider-runnable-track]:border-[#d6d6d6] [&::-webkit-slider-runnable-track]:bg-[#e7eaea] [&::-webkit-slider-thumb]:-mt-[8px] [&::-webkit-slider-thumb]:h-[18px] [&::-webkit-slider-thumb]:w-[11px] [&::-webkit-slider-thumb]:appearance-none [&::-webkit-slider-thumb]:rounded-t-[4px] [&::-webkit-slider-thumb]:bg-[#0078d7]"
          />
        </div>
        <span className="ml-1 text-[#a0a0a0]">+</span>
        <Icon w={16} h={16} className="ml-[6px]">
          <path d="M1 5V1h4M11 1h4v4M15 11v4h-4M5 15H1v-4" stroke="#888" />
          <path d="M8 1 5.500 4h5zM8 15l-2.500-3h5zM1 8l3-2.500v5zM15 8l-3-2.500v5z" fill={BLUE} />
          <circle cx="8" cy="8" r="2" fill="#ee8844" />
        </Icon>
      </div>
      <p className="pointer-events-none absolute right-2 bottom-2 text-[36px] leading-[44px] whitespace-nowrap text-white/60 [text-shadow:1px_1px_2px_rgba(90,90,90,0.7)]">
        CSDN @XiuLian_I
      </p>
    </footer>
  );
}

export default function App() {
  return (
    <div className="flex h-screen flex-col overflow-hidden bg-white font-['Noto_Sans','Noto_Sans_CJK_SC',sans-serif]">
      <TitleBar />
      <div className="relative border-b border-[#2b579a]">
        <MenuBar />
        <Ribbon />
        <div className="pointer-events-none absolute top-[3px] right-0 bottom-px left-[1px] border-2 border-[#ed1c24]" />
      </div>
      <div className="flex min-h-0 flex-1 bg-linear-to-r from-[#ebebfa] to-[#f3f6ff]">
        <WindowTree />
        <Editor />
        <VectorLibrary />
      </div>
      <StatusBar />
    </div>
  );
}
